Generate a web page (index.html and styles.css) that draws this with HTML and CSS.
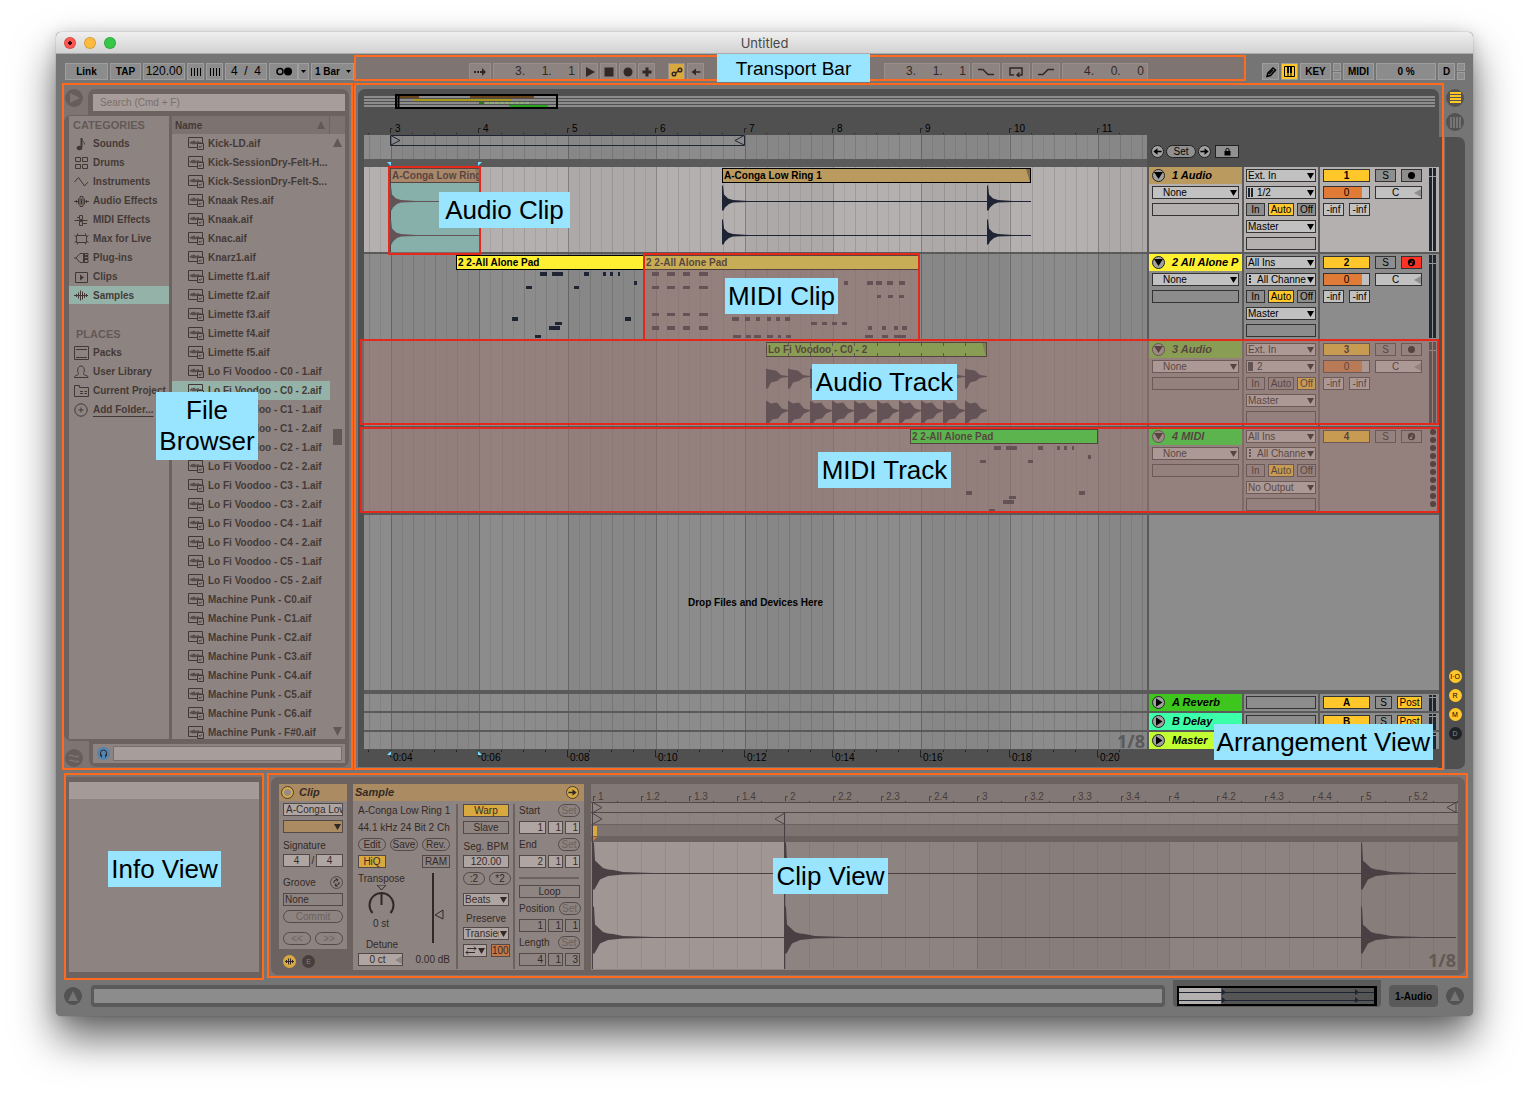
FILE: index.html
```html
<!DOCTYPE html>
<html lang="en">
<head>
<meta charset="utf-8">
<title>Untitled</title>
<meta name="viewport" content="width=device-width, initial-scale=1">
<link rel="stylesheet" href="styles.css">
</head>
<body>
<svg class="defs" aria-hidden="true">
  <symbol id="i-note" viewBox="0 0 16 16"><path d="M8.500 2v9" class="st two"/><path d="M8.500 2.500c0 3 3.500 3 3 6" class="st"/><ellipse cx="6.500" cy="12" rx="2.800" ry="2.200" class="fl"/></symbol>
  <symbol id="i-drums" viewBox="0 0 16 16"><path d="M2.500 2.500h5v4h-5zM9.500 2.500h5v4h-5zM2.500 9.500h5v4h-5zM9.500 9.500h5v4h-5z" class="st"/></symbol>
  <symbol id="i-inst" viewBox="0 0 16 16"><path d="M1.500 8l4-4.500 6 8.500 3.500-4" class="st"/></symbol>
  <symbol id="i-afx" viewBox="0 0 16 16"><path d="M1 8.500h4M3.500 7v3M5.500 5.500v6M11.500 5.500v6M13.500 7v3M12 8.500h4M7 3.500h3v10H7zM8.500 5.500v6" class="st"/></symbol>
  <symbol id="i-mfx" viewBox="0 0 16 16"><path d="M4 5.500h3M1.500 8.500h13M10 11.500h4M6.500 3.500h3v4h-3zM6.500 9.500h3v4h-3z" class="st"/></symbol>
  <symbol id="i-max" viewBox="0 0 16 16"><path d="M3.500 4.500h10v7h-10zM4.500 2.500v2M12.500 2.500v2M4.500 11.500v2M12.500 11.500v2M1.500 4.500l2 1.500v4l-2 1.500M15.500 4.500l-2 1.500v4l2 1.500" class="st"/></symbol>
  <symbol id="i-plug" viewBox="0 0 16 16"><path d="M1 8h2l4-4.500h3.500v9H7L3 8M12 3.500h3v2h-3M12 6.500h3v2h-3M12 9.500h3v3h-3M11.500 3v10" class="st"/></symbol>
  <symbol id="i-clip" viewBox="0 0 16 16"><path d="M2.500 3.500h12v10h-12z" class="st"/><path d="M7 5.500l4 3-4 3z" class="fl"/></symbol>
  <symbol id="i-samp" viewBox="0 0 16 16"><path d="M1 8.500h14M3.500 7v3M5.500 5.500v6M7.500 3.500v10M9.500 4.500v8M11.500 6v5M13.500 7v3" class="st"/></symbol>
  <symbol id="i-pack" viewBox="0 0 16 16"><path d="M1.500 1.500h14v13h-14zM3 4.500h11M3 12.500h11" class="st"/></symbol>
  <symbol id="i-user" viewBox="0 0 16 16"><path d="M1.500 13.500v-1c1-1.500 4-1 4-3C4 7 4.500 2 8 2s4 5 2.500 7.500c0 2 3 1.500 4.500 3v1z" class="st"/></symbol>
  <symbol id="i-proj" viewBox="0 0 16 16"><path d="M1.500 13.500v-11h5v2h9v9zM7 8.500h3M11.500 8.500H14M7 10.500h3M11.500 10.500H14" class="st"/></symbol>
  <symbol id="i-add" viewBox="0 0 16 16"><circle cx="8" cy="8" r="6.200" class="st"/><path d="M5.500 8h5M8 5.500v5" class="st"/></symbol>
  <symbol id="i-file" viewBox="0 0 16 13"><path d="M9.500 10.500h-9v-10h14v6" class="st"/><path d="M1.500 5.500h1v1h1V4.500h1V7h1V4h1v3h1V5h1v1.500h1V4.500h1v2h1v-1h2" class="st thin"/><path d="M9.500 6.500h6v6h-6zM11 9l1 1.500 2-2" class="st"/></symbol>
  <symbol id="i-left" viewBox="0 0 12 12"><path d="M6 2.500v7L1.500 6zM5 5.200h5.500v1.600H5z" class="fl"/></symbol>
  <symbol id="i-right" viewBox="0 0 12 12"><path d="M6 2.500v7L10.500 6zM7 5.200H1.500v1.600H7z" class="fl"/></symbol>
  <symbol id="i-key" viewBox="0 0 12 12"><path fill-rule="evenodd" d="M6 2a4 4 0 1 0 0 8 4 4 0 1 0 0-8zM6.200 3.200c.3 1 1.800 1.200 1.300 3C7.200 5.500 7 5.200 6.800 5.200V7.500A1.500 1.200 0 1 1 6.200 6.600z" class="fl"/></symbol>
</svg>

<main class="window">
  <header class="titlebar">
    <span class="lights"><button class="light red" aria-label="Close"></button><button class="light amber" aria-label="Minimise"></button><button class="light green" aria-label="Zoom"></button></span>
    <h1>Untitled</h1>
  </header>

  <div class="toolbar">
    <div class="tools">
      <button class="tb w44">Link</button><button class="tb w32">TAP</button><button class="tb w43 num">120.00</button>
      <button class="tb w18" aria-label="Nudge down"><svg width="12" height="8"><path d="M1.500 0v8M4.500 0v8M7.500 0v8M10.500 0v8" class="k"/></svg></button><button class="tb w18" aria-label="Nudge up"><svg width="12" height="8"><path d="M1.500 0v8M4.500 0v8M7.500 0v8M10.500 0v8" class="k"/></svg></button>
      <button class="tb w43 sig">4 &nbsp;/&nbsp; 4</button><span class="pair"><button class="tb w30" aria-label="Metronome"><svg width="18" height="9"><circle cx="5" cy="4.500" r="3" class="k2"/><circle cx="13" cy="4.500" r="4"/></svg></button><button class="tb w10" aria-label="Metronome menu"><svg width="5" height="3"><path d="M0 0h5L2.500 3z"/></svg></button></span>
      <button class="tb w44 bar">1 Bar<svg width="5" height="3"><path d="M0 0h5L2.500 3z"/></svg></button>
    </div>
    <section class="transport" aria-label="Transport">
      <div class="tools">
        <button class="tb w23" aria-label="Follow"><svg width="14" height="8"><path d="M1 3h2v2H1zM4 3h2v2H4zM7 3h2v2H7zM9 0l4 4-4 4z"/></svg></button><button class="tb w87 pos">3.&nbsp;&nbsp;&nbsp;&nbsp; 1.&nbsp;&nbsp;&nbsp;&nbsp; 1</button>
        <button class="tb w18" aria-label="Play"><svg width="10" height="10"><path d="M1 0l9 5-9 5z"/></svg></button><button class="tb w18" aria-label="Stop"><svg width="10" height="10"><path d="M.5.5h9v9h-9z"/></svg></button><button class="tb w18" aria-label="Record"><svg width="10" height="10"><circle cx="5" cy="5" r="4.500"/></svg></button><button class="tb w18" aria-label="Overdub"><svg width="10" height="10"><path d="M3.500.5h3v3h3v3h-3v3h-3v-3h-3v-3h3z"/></svg></button>
      </div>
      <div class="tools">
        <button class="tb w18 on" aria-label="Automation arm"><svg width="12" height="12"><path d="M4.500 7L7.500 5" class="k2"/><circle cx="3" cy="8" r="1.800" class="k2"/><circle cx="9" cy="4" r="1.800" class="k2"/></svg></button><button class="tb w18" aria-label="Re-enable automation"><svg width="12" height="12"><use href="#i-left"/></svg></button>
      </div>
      <div class="tools right">
        <button class="tb w87 pos">3.&nbsp;&nbsp;&nbsp;&nbsp; 1.&nbsp;&nbsp;&nbsp;&nbsp; 1</button><button class="tb w29" aria-label="Punch in"><svg width="16" height="8"><path d="M0 1.500h5l5 5h6" class="k2"/></svg></button><button class="tb w29" aria-label="Loop"><svg width="14" height="10"><path d="M5 8H1V1h12v7H9M10.500 5.500L8 8l2.500 2" class="k2"/></svg></button><button class="tb w29" aria-label="Punch out"><svg width="16" height="8"><path d="M0 6.500h5l5-5h6" class="k2"/></svg></button><button class="tb w87 pos">4.&nbsp;&nbsp;&nbsp;&nbsp; 0.&nbsp;&nbsp;&nbsp;&nbsp; 0</button>
      </div>
      <strong class="tag small">Transport Bar</strong>
    </section>
    <div class="tools">
      <button class="tb w18" aria-label="Draw mode"><svg width="12" height="12"><path d="M2 10.500L3 7l5-5 2.500 2-5 5.500z" class="k2"/><path d="M4 8l4-4" class="k2"/></svg></button><button class="tb w18 on" aria-label="Keyboard"><svg width="11" height="11"><path d="M.5.5h10v10H.500zM4 1v10M7 1v10" class="k"/><path d="M3 1h2v6H3zM6 1h2v6H6z"/></svg></button><button class="tb w32">KEY</button><span class="leds"><i></i><i></i></span><button class="tb w32">MIDI</button><button class="tb w61">0 %</button><button class="tb w18">D</button><span class="leds"><i></i><i></i></span>
    </div>
  </div>

  <div class="main">
    <section class="browser frame tint" aria-label="Browser">
      <div class="searchrow">
        <button class="disc" aria-label="Hide browser"><svg width="18" height="18"><path d="M5 4l10 5-10 5z"/></svg></button>
        <div class="searchbox"><input type="search" aria-label="Search" placeholder="Search (Cmd + F)"></div>
      </div>
      <div class="lists">
        <nav class="cats">
          <h2>CATEGORIES</h2>
          <a href="#sounds"><svg><use href="#i-note"/></svg>Sounds</a>
          <a href="#drums"><svg><use href="#i-drums"/></svg>Drums</a>
          <a href="#instruments"><svg><use href="#i-inst"/></svg>Instruments</a>
          <a href="#audiofx"><svg><use href="#i-afx"/></svg>Audio Effects</a>
          <a href="#midifx"><svg><use href="#i-mfx"/></svg>MIDI Effects</a>
          <a href="#max"><svg><use href="#i-max"/></svg>Max for Live</a>
          <a href="#plugins"><svg><use href="#i-plug"/></svg>Plug-ins</a>
          <a href="#clips"><svg><use href="#i-clip"/></svg>Clips</a>
          <a href="#samples" class="cur"><svg><use href="#i-samp"/></svg>Samples</a>
          <h2 class="places">PLACES</h2>
          <a href="#packs"><svg><use href="#i-pack"/></svg>Packs</a>
          <a href="#library"><svg><use href="#i-user"/></svg>User Library</a>
          <a href="#project"><svg><use href="#i-proj"/></svg>Current Project</a>
          <a href="#add"><svg><use href="#i-add"/></svg><u>Add Folder...</u></a>
        </nav>
        <div class="files">
          <div class="fhead"><span>Name</span><svg width="8" height="8"><path d="M4 0l4 8H0z"/></svg></div>
          <ul id="files"></ul>
          <div class="scroll"><svg width="9" height="9"><path d="M4.500 0L9 9H0z"/></svg><i></i><svg width="9" height="9"><path d="M4.500 9L9 0H0z"/></svg></div>
        </div>
      </div>
      <div class="preview">
        <button class="disc" aria-label="Groove pool"><svg width="18" height="18"><path d="M4 7c3-3 5 3 10 0M4 12c3-3 5 3 10 0" class="k2"/></svg></button>
        <div class="prebox"><div><button class="phones" aria-label="Preview"><svg width="13" height="13"><path d="M3.500 9V6a3 3 0 0 1 6 0v3M4.500 7.500v3M8.500 7.500v3" class="k"/></svg></button><input type="text" aria-label="Preview position"></div></div>
      </div>
      <strong class="tag t-browser">File Browser</strong>
    </section>

    <section class="arr frame" aria-label="Arrangement">
      <div class="panel">
        <svg class="overview" height="23" width="100%"></svg>
        <div class="rulers">
          <div class="rcol"><svg class="ruler" id="bars" height="23" width="100%"></svg>
            <div class="scrub"><svg class="grid" width="100%" height="24"></svg></div>
            <div class="strip"><svg width="140" height="8"><path d="M23 3h4v4zM114 3h4l-4 4z"/></svg></div></div>
          <div class="setrow"><button class="rnd" aria-label="Previous locator"><svg width="11" height="11"><use href="#i-left"/></svg></button><button class="pill">Set</button><button class="rnd" aria-label="Next locator"><svg width="11" height="11"><use href="#i-right"/></svg></button><button class="lock" aria-label="Lock envelopes"><svg width="9" height="9"><path d="M1.500 4h6v4.500h-6z"/><path d="M3 4V2.500c0-1.500 3-1.500 3 0V4" class="k"/></svg></button></div>
        </div>

        <div class="track lite">
          <div class="lane"><svg class="grid" width="100%" height="85"></svg>
            <div class="clip teal c1"><b>A-Conga Low Ring 1</b></div>
            <div class="clip tan c2"><b>A-Conga Low Ring 1</b></div>
            <svg class="ink" width="100%" height="85" data-conga="26:90,358:667,623:667"></svg>
            <div class="hot h1"></div><strong class="tag t1">Audio Clip</strong>
          </div>
          <div class="th"><div class="tname tan"><button class="fold" aria-label="Fold"></button>1 Audio</div><span class="sel ind"><select aria-label="Device"><option>None</option></select></span><div class="box"></div></div>
          <div class="io"><span class="sel"><select aria-label="Input"><option>Ext. In</option></select></span><span class="sel ch"><svg width="6" height="9"><path d="M0 0h2v9H0zM3 0h2v9H3z"/></svg><select aria-label="Channel"><option>1/2</option></select></span><div class="mon"><button>In</button><button class="on">Auto</button><button>Off</button></div><span class="sel"><select aria-label="Output"><option>Master</option></select></span><div class="box"></div></div>
          <div class="mix"><div class="mrow"><button class="act">1</button><button>S</button><button aria-label="Arm"><svg width="9" height="9"><circle cx="4.500" cy="4.500" r="3.500"/></svg></button></div><div class="mrow"><span class="vol">0</span><span class="pan">C</span></div><div class="mrow inf"><span>-inf</span><span>-inf</span></div><div class="meter"><i></i><i></i></div></div>
        </div>

        <div class="track">
          <div class="lane"><svg class="grid" width="100%" height="85"></svg>
            <div class="clip yellow c3"><b>2 2-All Alone Pad</b></div>
            <div class="clip yellow c4"><b>2 2-All Alone Pad</b></div>
            <svg class="ink" width="100%" height="85" data-pad="93" data-chords="1"></svg>
            <div class="hot h2"></div><strong class="tag t2">MIDI Clip</strong>
          </div>
          <div class="th"><div class="tname yellow"><button class="fold" aria-label="Fold"></button>2 All Alone P</div><span class="sel ind"><select aria-label="Device"><option>None</option></select></span><div class="box"></div></div>
          <div class="io"><span class="sel"><select aria-label="Input"><option>All Ins</option></select></span><span class="sel ch"><svg width="6" height="9"><path d="M1 0h2v2H1zM1 3h2v2H1zM1 6h2v2H1z"/></svg><select aria-label="Channel"><option>All Channels</option></select></span><div class="mon"><button>In</button><button class="on">Auto</button><button>Off</button></div><span class="sel"><select aria-label="Output"><option>Master</option></select></span><div class="box"></div></div>
          <div class="mix"><div class="mrow"><button class="act">2</button><button>S</button><button class="armed" aria-label="Arm"><svg width="11" height="11"><use href="#i-key"/></svg></button></div><div class="mrow"><span class="vol">0</span><span class="pan">C</span></div><div class="mrow inf"><span>-inf</span><span>-inf</span></div><div class="meter"><i></i><i></i></div></div>
        </div>

        <div class="track mark m3">
          <div class="lane"><svg class="grid" width="100%" height="85"></svg>
            <div class="clip olive c5"><b>Lo Fi Voodoo - C0 - 2</b></div>
            <svg class="ink" width="100%" height="85" data-voodoo="402"></svg>
            <strong class="tag t3">Audio Track</strong>
          </div>
          <div class="th"><div class="tname olive"><button class="fold" aria-label="Fold"></button>3 Audio</div><span class="sel ind"><select aria-label="Device"><option>None</option></select></span><div class="box"></div></div>
          <div class="io"><span class="sel"><select aria-label="Input"><option>Ext. In</option></select></span><span class="sel ch"><svg width="6" height="9"><path d="M0 0h5v9H0z"/></svg><select aria-label="Channel"><option>2</option></select></span><div class="mon"><button>In</button><button>Auto</button><button class="on">Off</button></div><span class="sel"><select aria-label="Output"><option>Master</option></select></span><div class="box"></div></div>
          <div class="mix"><div class="mrow"><button class="act">3</button><button>S</button><button aria-label="Arm"><svg width="9" height="9"><circle cx="4.500" cy="4.500" r="3.500"/></svg></button></div><div class="mrow"><span class="vol">0</span><span class="pan">C</span></div><div class="mrow inf"><span>-inf</span><span>-inf</span></div><div class="meter"><i></i><i></i></div></div>
        </div>

        <div class="track mark m4">
          <div class="lane"><svg class="grid" width="100%" height="85"></svg>
            <div class="clip lime c6"><b>2 2-All Alone Pad</b></div>
            <svg class="ink" width="100%" height="85" data-pad="547"></svg>
            <strong class="tag t4">MIDI Track</strong>
          </div>
          <div class="th"><div class="tname lime"><button class="fold" aria-label="Fold"></button>4 MIDI</div><span class="sel ind"><select aria-label="Device"><option>None</option></select></span><div class="box"></div></div>
          <div class="io"><span class="sel"><select aria-label="Input"><option>All Ins</option></select></span><span class="sel ch"><svg width="6" height="9"><path d="M1 0h2v2H1zM1 3h2v2H1zM1 6h2v2H1z"/></svg><select aria-label="Channel"><option>All Channels</option></select></span><div class="mon"><button>In</button><button class="on">Auto</button><button>Off</button></div><span class="sel"><select aria-label="Output"><option>No Output</option></select></span><div class="box"></div></div>
          <div class="mix"><div class="mrow"><button class="act">4</button><button>S</button><button aria-label="Arm"><svg width="11" height="11"><use href="#i-key"/></svg></button></div><svg class="dots" width="8" height="84"></svg></div>
        </div>

        <div class="drop"><div class="lane"><svg class="grid" width="100%" height="175"></svg><p>Drop Files and Devices Here</p></div><div class="blank"></div></div>

        <div class="track ret"><div class="lane"><svg class="grid" width="100%" height="17"></svg></div><div class="th"><div class="tname g1"><button class="fold r" aria-label="Unfold"></button>A Reverb</div></div><div class="io"><div class="box"></div></div><div class="mix"><div class="mrow"><button class="act">A</button><button class="s16">S</button><button class="post">Post</button></div><div class="meter"><i></i><i></i></div></div></div>
        <div class="track ret"><div class="lane"><svg class="grid" width="100%" height="17"></svg></div><div class="th"><div class="tname g2"><button class="fold r" aria-label="Unfold"></button>B Delay</div></div><div class="io"><div class="box"></div></div><div class="mix"><div class="mrow"><button class="act">B</button><button class="s16">S</button><button class="post">Post</button></div><div class="meter"><i></i><i></i></div></div></div>
        <div class="track ret master"><div class="lane"><svg class="grid" width="100%" height="17"></svg><span class="div8">1/8</span></div><div class="th"><div class="tname g3"><button class="fold r" aria-label="Unfold"></button>Master</div></div><div class="io"></div><div class="mix"><div class="meter"><i></i><i></i></div></div></div>
        <svg class="ruler" id="times" height="18" width="100%"></svg>
      </div>
      <strong class="tag t-arr">Arrangement View</strong>
    </section>

    <div class="rail">
      <button class="disc on" aria-label="Arrangement view"><svg width="18" height="18"><path d="M4 4h11M4 7h11M4 10h11M4 13h11" class="k3"/></svg></button>
      <button class="disc" aria-label="Session view"><svg width="18" height="18"><path d="M5 4v11M8 4v11M11 4v11M14 4v11" class="k3"/></svg></button>
      <div class="railbox"><button>I·O</button><button>R</button><button>M</button><button class="off">D</button></div>
    </div>
  </div>

  <div class="lower">
    <section class="info frame tint" aria-label="Info"><div class="infobody"><div></div></div><strong class="tag t-info">Info View</strong></section>
    <section class="detail frame tint" aria-label="Clip detail">
      <div class="clipcol">
        <form class="clipbox">
          <h2><button type="button" class="power" aria-label="Clip activator"></button>Clip</h2>
          <div class="fields">
            <input type="text" aria-label="Clip name" value="A-Conga Low Ring 1">
            <span class="sel col"><select aria-label="Clip colour"><option></option></select></span>
            <label for="num">Signature</label>
            <div class="cr"><input id="num" class="mid" value="4"><span>/</span><input class="mid" aria-label="Denominator" value="4"></div>
            <div class="cr groove"><span>Groove</span><button type="button" class="swap" aria-label="Hot-swap groove"><svg width="13" height="13"><path d="M4 7V5l3-1.500M9 6v2L6 9.500M5.500 2.500L8 3.500 7 5.500M7.500 10.500L5 9.500l1-2" class="k"/></svg></button></div>
            <div class="box txt">None</div>
            <button type="button" class="pl dim">Commit</button>
            <div class="cr nudge"><button type="button" class="pl dim">&lt;&lt;</button><button type="button" class="pl dim">&gt;&gt;</button></div>
          </div>
        </form>
        <div class="modes"><button aria-label="Sample box"><svg width="13" height="13"><path d="M2 6.500h9M3.500 5v3M5.500 3.500v6M7.500 3.500v6M9.500 5v3" class="k"/></svg></button><button class="off">E</button></div>
      </div>
      <form class="sample">
        <h2>Sample<button type="button" class="go" aria-label="Hide editor"><svg width="11" height="11"><use href="#i-right"/></svg></button></h2>
        <div class="scols">
          <div class="s1">
            <p>A-Conga Low Ring 1</p><p class="fmt">44.1 kHz 24 Bit 2 Ch</p>
            <div class="cr"><button type="button" class="pl">Edit</button><button type="button" class="pl">Save</button><button type="button" class="pl">Rev.</button></div>
            <div class="cr"><button type="button" class="sq on">HiQ</button><button type="button" class="sq">RAM</button></div>
            <div class="pitch">
              <div><span>Transpose</span><svg width="46" height="32"><path d="M19 0h9l-4.500 5z" class="k"/><path d="M14.500 28a12 12 0 1 1 18 0M23.500 7v13" class="k3"/></svg><span class="c">0 st</span><span class="c det">Detune</span></div>
              <svg width="16" height="72"><path d="M4 1v70" class="k3"/><path d="M6 43l8-5v9z" class="k"/></svg>
            </div>
            <div class="cr"><span class="ct">0 ct</span><span>0.00 dB</span></div>
          </div>
          <div class="s2">
            <button type="button" class="sq on">Warp</button><button type="button" class="sq">Slave</button>
            <label for="bpm">Seg. BPM</label><input id="bpm" class="mid" value="120.00">
            <div class="cr"><button type="button" class="pl">:2</button><button type="button" class="pl">*2</button></div>
            <span class="sel beats"><select aria-label="Warp mode"><option>Beats</option></select></span>
            <label for="pres">Preserve</label><span class="sel"><select id="pres"><option>Transients</option></select></span>
            <div class="cr"><span class="sel loopm"><svg width="12" height="9"><path d="M1 6.500h9M3 4.500L1 6.500l2 2M11 2.500H2M9 .5l2 2-2 2" class="k"/></svg><select aria-label="Transient loop mode"><option></option></select></span><span class="env">100</span></div>
          </div>
          <div class="s3">
            <div class="cr"><span>Start</span><button type="button" class="pl dim">Set</button></div><div class="tri"><span>1</span><span>1</span><span>1</span></div>
            <div class="cr"><span>End</span><button type="button" class="pl dim">Set</button></div><div class="tri"><span>2</span><span>1</span><span>1</span></div>
            <hr><button type="button" class="sq">Loop</button>
            <div class="cr"><span>Position</span><button type="button" class="pl dim">Set</button></div><div class="tri flat"><span>1</span><span>1</span><span>1</span></div>
            <div class="cr"><span>Length</span><button type="button" class="pl dim">Set</button></div><div class="tri flat"><span>4</span><span>1</span><span>3</span></div>
          </div>
        </div>
      </form>
      <div class="editor"><svg id="editor" width="100%" height="186"></svg><span class="div8">1/8</span></div>
      <strong class="tag t-clip">Clip View</strong>
    </section>
  </div>

  <footer class="status">
    <button class="disc" aria-label="Info view"><svg width="18" height="18"><path d="M9 4l5 10H4z"/></svg></button>
    <div class="msg"></div>
    <div class="mini"><svg width="200" height="20"><path d="M0 0h200v20H0z" class="bg"/><path d="M2 2h42v16H2z" class="lt"/><path d="M44 2h153v16H44z" class="dk"/><path d="M2 6.500h195M2 14.500h195" class="ln"/><path d="M45 3l4 3.500-4 2.500zM45 11l4 3.500-4 2.500zM178 3l4 3.500-4 2.500zM178 11l4 3.500-4 2.500z" class="wv"/></svg></div>
    <button class="sel1">1-Audio</button>
    <button class="disc" aria-label="Detail view"><svg width="18" height="18"><path d="M9 4l5 10H4z"/></svg></button>
  </footer>
</main>
<script src="app.js"></script>
</body>
</html>
```
FILE: styles.css
```css
* { box-sizing: border-box; }
:root {
  --frame: #ff6a1f;
  --red: #e4281b;
  --bg: #757575;
  --dark: #505050;
  --edge: #5a5a5a;
  --face: #8c8c8c;
  --light: #c1c1c1;
  --line: #333;
  --on: #ffc729;
  --pick: #98d4cb;
}
body { margin: 0; padding: 32px 56px 79px; background: #fff; font: 10px/13px "Liberation Sans", Arial, sans-serif; color: #000; }
h1, h2, p, ul { margin: 0; padding: 0; font-size: inherit; }
button, input, select { font: inherit; color: inherit; margin: 0; padding: 0; border: 0; background: none; border-radius: 0; appearance: none; min-width: 0; }
input { outline: 0; }
svg { display: block; flex: none; }
.defs { position: absolute; width: 0; height: 0; }
.st { fill: none; stroke: currentColor; }
.two { stroke-width: 2; }
.thin { stroke-width: .7; }
.fl { fill: currentColor; }
.k { fill: none; stroke: #000; }
.k2 { fill: none; stroke: #000; stroke-width: 1.5; }
.k3 { fill: none; stroke: #000; stroke-width: 2; }

.window { min-width: 1000px; border-radius: 5px; background: var(--bg); box-shadow: 0 0 1px rgba(0,0,0,.5), 0 22px 42px rgba(0,0,0,.6), 0 2px 16px rgba(0,0,0,.15); }
.titlebar { position: relative; height: 22px; display: flex; align-items: center; justify-content: center; border-radius: 5px 5px 0 0; background: linear-gradient(#efefef, #d2d2d2); border-bottom: 1px solid #ababab; }
.titlebar h1 { font: 13px/20px Inter, sans-serif; color: #484848; }
.lights { position: absolute; left: 8px; top: 5px; display: flex; gap: 8px; }
.light { width: 12px; height: 12px; border-radius: 50%; border: 1px solid rgba(0,0,0,.15); }
.red { background: radial-gradient(circle, #400 2px, #fc5753 2px); }
.amber { background: #fdbc40; }
.green { background: #34c748; }

.toolbar { display: flex; height: 29px; padding: 9px 7px 0 9px; }
.tools { display: flex; gap: 1px; }
.tb { height: 17px; display: flex; align-items: center; justify-content: center; white-space: nowrap; background: var(--face); border: 1px solid #9e9e9e; outline: 0; font-weight: bold; font-size: 10px; margin-right: 1px; }
.tb.num { font-size: 12px; font-weight: normal; }
.tb.sig { font-size: 12px; font-weight: normal; }
.tb.pos { justify-content: flex-end; padding-right: 3px; font-size: 12px; font-weight: normal; white-space: pre; }
.tb.on { background: var(--on); }
.tb.bar { justify-content: space-between; padding: 0 2px 0 3px; margin: 0; }
.pair { display: flex; }
.pair .tb + .tb { margin-left: -1px; }
.w10 { width: 11px; } .w18 { width: 17px; } .w23 { width: 22px; } .w29 { width: 28px; } .w30 { width: 29px; } .w32 { width: 31px; } .w43 { width: 42px; } .w44 { width: 43px; } .w61 { width: 60px; } .w87 { width: 86px; }
.leds { display: flex; flex-direction: column; gap: 1px; margin-right: 1px; }
.leds i { width: 8px; height: 8px; background: var(--face); border: 1px solid #9e9e9e; }
.transport { position: relative; flex: 1; display: flex; padding-left: 115px; margin-right: 16px; gap: 12px; }
.transport .tools { height: 17px; }
.transport .right { margin-left: auto; padding-right: 97px; }
.transport::after { content: ""; position: absolute; inset: -8px 0 2px 0; border: 2px solid var(--frame); background: rgba(143,114,106,.35); pointer-events: none; }

.frame { position: relative; border: 2px solid var(--frame); }
.tint::after { content: ""; position: absolute; inset: 0; background: rgba(143,114,106,.35); pointer-events: none; z-index: 2; }
.tag { position: absolute; z-index: 5; height: 36px; padding: 0 3px; background: #99e4ff; font-weight: normal; font-size: 26px; line-height: 36px; text-align: center; white-space: nowrap; }
.tag.small { left: 363px; top: -9px; width: 153px; height: 28px; font-size: 19px; line-height: 30px; }

.main { display: flex; gap: 1px; padding: 0 8px 0 6px; }
.disc { width: 18px; height: 18px; border-radius: 50%; background: #525252; flex: none; }
.disc path { fill: #757575; }
.disc .k2, .disc .k3 { fill: none; stroke: #757575; }

.browser { width: 291px; flex: none; display: flex; flex-direction: column; padding: 4px 2px 1px 0; font-weight: bold; font-size: 10px; color: #000; }
.searchrow { display: flex; align-items: flex-start; gap: 5px; }
.searchrow .disc { margin-left: 1px; }
.searchbox { flex: 1; height: 27px; margin-bottom: -1px; padding: 5px 4px 0 5px; background: var(--edge); border-radius: 7px 7px 0 0; }
.searchbox input { display: block; width: 100%; height: 17px; padding: 0 7px; background: #b4b4b4; font-weight: normal; }
.searchbox input::placeholder { color: #6e6e6e; opacity: 1; }
.lists { display: flex; gap: 3px; padding: 1px 4px 2px 5px; background: var(--edge); border-radius: 7px 0 0 7px; }
.cats { width: 100px; background: var(--face); overflow: hidden; }
.cats h2 { height: 18px; padding-left: 4px; font-size: 11px; line-height: 18px; color: #4c4c4c; }
.cats h2.places { margin-top: 20px; height: 19px; padding-left: 7px; line-height: 20px; }
.cats a { display: flex; align-items: center; gap: 4px; height: 19px; padding-left: 4px; white-space: nowrap; color: #1a1a1a; text-decoration: none; }
.cats a svg { width: 16px; height: 16px; }
.cats a.cur { background: var(--pick); height: 18px; }
.cats u { text-underline-offset: 3px; }
.files { flex: 1; position: relative; background: var(--face); overflow: hidden; }
.fhead { height: 18px; display: flex; justify-content: space-between; align-items: center; margin-right: 15px; padding: 0 4px 0 3px; background: #727272; border-right: 1px solid var(--edge); box-shadow: 15px 0 #727272; color: #1a1a1a; }
.fhead svg { fill: #4a4a4a; }
.files ul { list-style: none; margin: 0 15px -3px 0; }
.files li { display: flex; align-items: center; gap: 4px; height: 19px; padding-left: 16px; white-space: nowrap; color: #1a1a1a; }
.files li.cur { background: var(--pick); }
.scroll { position: absolute; right: 3px; top: 22px; bottom: 3px; display: flex; flex-direction: column; justify-content: space-between; }
.scroll svg { fill: #4a4a4a; }
.scroll i { width: 9px; height: 16px; background: #4a4a4a; }
.preview { display: flex; gap: 6px; align-items: center; }
.preview .disc { margin: 7px 0 0 1px; }
.prebox { flex: 1; height: 26px; padding: 3px 4px 4px 4px; background: var(--edge); border-radius: 0 0 7px 7px; }
.prebox div { display: flex; align-items: center; gap: 3px; height: 19px; padding: 0 3px 0 4px; background: var(--face); }
.prebox input { flex: 1; height: 15px; background: #b4b4b4; border: 1px solid #6e6e6e; }
.phones { width: 13px; height: 13px; border-radius: 50%; background: #2f8ed8; }
.t-browser { left: 92px; top: 307px; width: 102px; height: 68px; padding: 3px 0; line-height: 31px; white-space: normal; }

.arr { flex: 1; min-width: 0; padding: 4px 3px 0 2px; background: linear-gradient(transparent 52px, var(--dark) 52px) right / 4px 100% no-repeat; }
.panel { padding: 0 0 0 6px; background: var(--dark); border-radius: 7px 7px 0 0; }
.rulers, .track, .drop { display: flex; gap: 2px; }
.rcol, .lane { flex: 1; min-width: 0; position: relative; }
.ruler path, #editor .tick { fill: none; stroke: #222; }
.scrub { height: 24px; background: var(--face); }
.strip { height: 8px; background: var(--edge); }
.strip path { fill: #7df; }
.setrow { width: 290px; display: flex; gap: 2px; align-items: flex-start; padding: 33px 0 0 2px; }
.rnd { width: 13px; height: 13px; padding: 1px; border-radius: 50%; background: #a0a0a0; border: 1px solid #222; }
.rnd svg { margin: -1px; }
.pill { width: 30px; height: 13px; border-radius: 7px; background: #909090; border: 1px solid #222; line-height: 11px; }
.lock { width: 24px; height: 13px; margin-left: 2px; border: 1px solid #222; background: #909090; display: grid; place-items: center; }

.track { position: relative; margin-bottom: 2px; background: var(--edge); box-shadow: 0 2px var(--edge); }
.lane { background: var(--face); overflow: visible; }
.th { width: 93px; background: var(--face); }
.io { width: 74px; padding: 2px; background: var(--face); }
.mix { width: 119px; position: relative; padding: 2px 3px; background: var(--face); }
.lite .lane, .lite .th, .lite .io, .lite .mix { background: #b4b0b0; }
.io, .th, .mix { display: flex; flex-direction: column; gap: 4px; }
.th { gap: 0; }
.tname { height: 17px; display: flex; align-items: center; gap: 7px; padding-left: 3px; font-weight: bold; font-style: italic; font-size: 11px; white-space: nowrap; overflow: hidden; }
.th .sel, .th .box { margin: 2px 3px; width: 87px; }
.fold { width: 13px; height: 13px; flex: none; border-radius: 50%; border: 1px solid #222; background: #a0a0a0; display: grid; place-items: center; }
.fold::after { content: ""; width: 9px; height: 7px; background: #000; clip-path: polygon(0 0, 100% 0, 50% 100%); }
.fold.r::after { width: 7px; height: 9px; clip-path: polygon(0 0, 100% 50%, 0 100%); margin-left: 1px; }
.tan { background: #bb9a5f; } .yellow { background: #fff032; } .olive { background: #73ca2e; } .lime { background: #0bff20; }
.g1 { background: #3ec61e; } .g2 { background: #3cffa9; } .g3 { background: #c1ff32; }
.sel { position: relative; display: block; height: 13px; width: 70px; background: var(--light); border: 1px solid var(--line); }
.sel select { display: block; width: calc(100% - 9px); height: 11px; padding-left: 1px; line-height: 11px; overflow: hidden; text-overflow: clip; }
.sel::after { content: ""; position: absolute; right: 1px; top: 3px; width: 7px; height: 6px; background: #000; clip-path: polygon(0 0, 100% 0, 50% 100%); }
.sel.ind select { padding-left: 10px; }
.sel.ch svg { position: absolute; left: 1px; top: 1px; fill: #1e2630; }
.sel.ch select { padding-left: 10px; }
.box { height: 13px; border: 1px solid var(--line); }
.mon { display: flex; justify-content: space-between; height: 13px; }
.mon button { width: 19px; height: 13px; border: 1px solid var(--line); line-height: 11px; background: #8e8e8e; }
.mon button:nth-child(2) { width: 26px; }
.mon .on, .mix .act, .mix .post { background: var(--on); }
.mrow { display: flex; gap: 5px; height: 13px; }
.mrow button, .mrow span { height: 13px; width: 21px; border: 1px solid var(--line); line-height: 11px; background: #8e8e8e; text-align: center; display: grid; place-items: center; overflow: hidden; white-space: nowrap; }
.mrow .act { width: 47px; font-weight: bold; }
.mrow .vol { width: 47px; background: linear-gradient(90deg, #df7b37 38px, var(--light) 38px); }
.mrow .pan { width: 47px; background: var(--light); position: relative; padding-right: 6px; }
.pan::after { content: ""; position: absolute; right: 0; top: 2px; width: 7px; height: 8px; background: #8e8e8e; clip-path: polygon(100% 0, 100% 100%, 0 50%); }
.mrow.inf span { background: var(--light); }
.mrow .armed { background: #ff3324; }
.mrow .s16 { width: 17px; }
.mrow .post { width: 25px; }
.meter { position: absolute; right: 3px; top: 1px; bottom: 1px; display: flex; gap: 1px; }
.meter i { width: 3px; background: linear-gradient(#1e2630 8px, #999 8px, #999 9px, #1e2630 9px); }
.dots { position: absolute; right: 2px; top: 0; }
.ret { height: 17px; }
.master { margin-bottom: 0; box-shadow: none; }
.ret .meter i { background: linear-gradient(#1e2630 2px, #999 2px, #999 3px, #1e2630 3px); }
.ret .meter { bottom: 0; }

.clip { position: absolute; top: 1px; height: 15px; border: 1px solid #000; font-size: 10px; line-height: 14px; padding-left: 1px; white-space: nowrap; overflow: hidden; }
.clip::after { content: ""; position: absolute; right: 0; top: 0; width: 4px; height: 13px; background: rgba(0,0,0,.3); clip-path: polygon(0 0, 100% 0, 100% 100%); }
.yellow.clip::after, .lime.clip::after { display: none; }
.c1 { left: 26px; width: 90px; } .c2 { left: 358px; width: 309px; } .c3 { left: 92px; width: 189px; } .c4 { left: 280px; width: 275px; } .c5 { left: 402px; width: 221px; } .c6 { left: 546px; width: 188px; }
.clip.teal { height: 84px; background: linear-gradient(#bb9a5f 13px, #000 13px, #000 14px, #6cf5f0 14px); border-bottom: 0; }
.ink { position: absolute; left: 0; top: 0; fill: #1e2433; }
.ink .ln { stroke: #1e2433; }
.hot, .mark::after { content: ""; position: absolute; border: 2px solid var(--red); background: rgba(155,121,114,.56); pointer-events: none; z-index: 2; }
.h1 { left: 24px; top: -1px; width: 93px; height: 89px; z-index: 3; }
.h2 { left: 279px; top: -1px; width: 277px; height: 88px; }
.m3::after { inset: -2px 0 1px -4px; }
.m4::after { inset: -1px 0 0 -4px; }
.t1 { left: 75px; top: 25px; width: 131px; } .t2 { left: 361px; top: 24px; width: 113px; } .t3 { left: 448px; top: 23px; width: 145px; } .t4 { left: 454px; top: 24px; width: 133px; }
.drop { background: var(--edge); border-bottom: 4px solid var(--edge); }
.drop p { position: absolute; inset: 80px 0 auto; text-align: center; font-weight: bold; font-size: 10px; line-height: 16px; }
.blank { width: 290px; background: var(--face); }
.div8 { position: absolute; right: 2px; bottom: -1px; font: bold 18px/18px "Open Sans", sans-serif; color: var(--edge); }
.t-arr { right: 9px; bottom: 8px; }

.rail { width: 20px; display: flex; flex-direction: column; align-items: center; gap: 6px; padding: 6px 0 1px; }
.rail .disc.on .k3 { stroke: var(--on); }
.railbox { flex: 1; align-self: stretch; display: flex; flex-direction: column; justify-content: flex-end; align-items: center; gap: 6px; padding-bottom: 29px; background: var(--dark); border-radius: 0 7px 7px 0; }
.railbox button, .modes button { width: 13px; height: 13px; border-radius: 50%; background: var(--on); font-size: 7px; line-height: 13px; text-align: center; white-space: nowrap; }
.railbox .off, .modes .off { background: #1e2328; color: #888; }

.lower { display: flex; align-items: flex-start; gap: 3px; padding: 3px 5px 0 8px; }
.info { width: 200px; padding: 2px 0 0; background: linear-gradient(var(--edge), var(--edge)) 0 2px no-repeat; }
.infobody { margin: 5px 3px 6px; height: 190px; background: var(--face); }
.infobody div { height: 17px; background: #b0b0b0; }
.t-info { left: 42px; top: 76px; width: 113px; }
.detail { flex: 1; min-width: 0; display: flex; gap: 6px; padding: 9px 8px 6px 10px; }
.detail::before { content: ""; position: absolute; inset: 2px 1px 1px 2px; border-radius: 7px; background: var(--edge); }
.detail > * { position: relative; }
.clipcol { width: 68px; }
.clipbox { height: 165px; background: var(--face); }
.detail h2 { height: 17px; display: flex; align-items: center; gap: 5px; padding: 0 5px 0 2px; background: #bb9a5f; font-size: 11px; font-style: italic; color: #000; }
.power, .go { width: 13px; height: 13px; border-radius: 50%; border: 1px solid #222; background: var(--on); }
.power { background: radial-gradient(circle, #999 3px, var(--on) 4px); }
.go { margin-left: auto; }
.fields { padding: 2px 4px; display: flex; flex-direction: column; gap: 4px; }
.detail input, .detail .sel, .tri span, .ct, .env { height: 13px; border: 1px solid var(--line); background: var(--light); line-height: 11px; }
.detail input { width: 100%; padding-left: 2px; }
.detail .mid { text-align: center; padding: 0; }
.detail .sel { width: 100%; }
.detail .sel.col { background: #bb9a5f; }
.cr { display: flex; justify-content: space-between; align-items: center; height: 13px; gap: 4px; }
.fields label { line-height: 17px; height: 13px; }
.fields .cr { gap: 1px; }
.fields .mid { width: 27px; }
.groove { margin-top: 5px; }
.swap { width: 13px; height: 13px; border-radius: 50%; border: 1px solid var(--line); }
.swap svg { margin: -1px; }
.txt { line-height: 11px; padding-left: 1px; }
.pl { height: 13px; border: 1px solid var(--line); border-radius: 7px; line-height: 11px; min-width: 22px; white-space: nowrap; }
.s1 .pl, .nudge .pl, .s1 .sq { width: 28px; }
.dim { color: #5a5a5a; }
.nudge { margin-top: 5px; }
.modes { display: flex; gap: 6px; padding: 6px 0 0 4px; }
.modes .off { background: #222; }
.sample { width: 231px; height: 186px; background: var(--face); }
.scols { display: flex; padding: 3px 4px 1px 5px; }
.scols > div { display: flex; flex-direction: column; gap: 4px; height: 165px; }
.s1 { width: 100px; padding-right: 6px; border-right: 2px solid var(--edge); }
.s1 p { height: 13px; white-space: nowrap; }
.s2 { width: 57px; padding: 0 4px 0 5px; border-right: 2px solid var(--edge); }
.s3 { width: 65px; padding-left: 4px; }
.pitch { display: flex; height: 77px; justify-content: space-between; padding-right: 5px; }
.pitch div { width: 60px; }
.pitch span { display: block; height: 13px; }
.pitch .c { width: 46px; text-align: center; }
.pitch .det { margin-top: 8px; padding-left: 2px; }
.ct { width: 45px; text-align: center; padding-right: 6px; position: relative; }
.ct::after { content: ""; position: absolute; right: 0; top: 2px; width: 7px; height: 8px; background: #8e8e8e; clip-path: polygon(100% 0, 100% 100%, 0 50%); }
.sq { height: 13px; border: 1px solid var(--line); line-height: 11px; background: #8e8e8e; flex: none; }
.sq.on { background: var(--on); }
.s2 label { height: 13px; line-height: 17px; text-align: center; white-space: nowrap; }
.s2 input, .s2 .sel, .s2 .cr { flex: none; }
.beats { margin-top: 4px; }
.detail .loopm { width: 24px; }
.loopm svg { position: absolute; left: 1px; top: 1px; }
.env { width: 22px; background: #df7b37; text-align: center; }
.tri { display: flex; gap: 2px; height: 13px; }
.tri span { flex: 1; text-align: right; padding-right: 1px; }
.tri span:first-child { flex: none; width: 27px; padding-right: 2px; }
.tri.flat span { background: var(--face); }
.s3 hr { width: 60px; height: 2px; margin: 5px 0 2px; border: 0; background: var(--edge); flex: none; }
.editor { flex: 1; min-width: 0; margin-left: 1px; background: var(--face); }
#editor text { fill: #222; }
.editor .div8 { right: 2px; bottom: 1px; color: #4a4a4a; }
.detail .t-clip { position: absolute; left: 504px; top: 83px; width: 115px; }

.status { display: flex; align-items: flex-start; padding: 0 9px 0 8px; height: 36px; }
.status .disc { margin-top: 7px; }
.msg { flex: 1; height: 22px; margin: 5px 8px 0 9px; border: 4px solid var(--edge); border-width: 4px 3px; border-radius: 4px; background: var(--face); }
.mini { padding: 6px 4px 1px; background: var(--edge); border-radius: 0 0 4px 4px; }
.mini .bg { fill: #000; } .mini .lt { fill: #b4b0b0; } .mini .dk { fill: #555; } .mini .ln { stroke: #1e2433; } .mini .wv { fill: #1e2433; }
.sel1 { width: 49px; height: 22px; margin: 5px 8px 0 8px; border-radius: 4px; background: var(--edge); font-weight: bold; font-size: 10px; }
```
FILE: app.js
```js
// Timeline geometry: first bar line and bar width, in lane pixels.
var ORIGIN = 27, BAR = 88.4;
var $$ = function (s) { return document.querySelectorAll(s); };
function rect(x, y, w, h, fill) {
  return '<rect x="' + x + '" y="' + y + '" width="' + w + '" height="' + h + '"' + (fill ? ' fill="' + fill + '"' : '') + '/>';
}
function text(x, y, t) { return '<text x="' + x + '" y="' + y + '">' + t + '</text>'; }

// Bar shading and grid lines.
$$('svg.grid').forEach(function (g) {
  var out = '', w = g.getBoundingClientRect().width, x, i;
  for (i = 0; (x = Math.round(ORIGIN + i * BAR)) < w; i += 2) out += rect(x, 0, Math.min(88, w - x), '100%', 'rgba(0,0,0,.035)');
  for (i = -2; (x = Math.round(ORIGIN + i * BAR / 8)) < w; i++) {
    out += rect(x, 0, 1, '100%', i % 8 === 0 ? 'rgba(0,0,0,.25)' : i % 2 === 0 ? 'rgba(0,0,0,.12)' : 'rgba(0,0,0,.07)');
  }
  g.innerHTML = out;
});
document.querySelector('.scrub svg').innerHTML += '<path d="M26.500.5h354v10h-354zM27 .5l9 5-9 4.500M380 .5l-9 5 9 4.500" fill="none" stroke="#1e2433"/>';

// Rulers.
(function () {
  var bars = '', times = '', i, x, n;
  for (i = -1; i < 34; i++) {
    x = Math.round(ORIGIN + i * BAR / 4);
    n = i / 4;
    if (i % 4 === 0) {
      bars += '<path d="M' + (x - .5) + ' 21v-4.500h2"/>' + text(x + 4, 20, n + 3);
      times += '<path d="M' + (x - .5) + ' 1v7h2"/>' + text(x + 2, 12, '0:' + ('0' + (4 + 2 * n)).slice(-2));
    } else {
      bars += rect(x - 1, 21, 1, 1, '#222');
      times += rect(x - 1, 1, 1, 2, '#222');
    }
  }
  document.getElementById('bars').innerHTML = bars;
  document.getElementById('times').innerHTML = times + '<path d="M27 2v4h-4zM114 2v4h4z" style="fill:#7df;stroke:none"/>';
})();

// Overview strip.
(function () {
  var o = '';
  [7, 10, 13, 16].forEach(function (y) { o += '<rect x="0" y="' + y + '" width="calc(100% - 4px)" height="2" fill="#8c8c8c"/>'; });
  o += rect(35, 7, 20, 2, '#6b451c') + rect(106, 7, 64, 2, '#6b451c') + rect(50, 10, 97, 2, '#a99a1c') + rect(115, 13, 5, 2, '#2c7a1a');
  for (var i = 0; i < 9; i++) o += rect(121 + i * 5, 13, 4, 2, '#8fae7c');
  o += rect(145, 16, 39, 2, '#23a81d') + '<path d="M32 6h161v13H32zM34.500 7v11" fill="none" stroke="#000" stroke-width="2"/>';
  document.querySelector('.overview').innerHTML = o;
})();

// Clip contents.
var PAD = [[83,18,7,4],[95,18,11,4],[127,18,5,4],[146,18,3,4],[153,18,3,4],[161,18,2,4],[177,27,3,4],[69,32,6,3],[117,32,5,3],[55,63,6,4],[168,63,6,4],[98,68,7,3],[92,72,11,4],[78,81,6,3]];
var CHORDS = [[732,63,7,4],[745,63,5,4],[756,63,4,4],[767,63,4,4],[776,63,4,4],[785,63,5,4],[733,81,8,3],[746,81,5,3],[754,81,7,3],[767,81,6,3],[778,81,3,3],[786,81,5,3],[811,68,6,3],[822,68,5,3],[832,68,5,3],[842,68,5,3],[844,27,4,4],[867,27,6,4],[876,27,6,4],[887,27,6,4],[899,27,6,4],[877,41,4,3],[888,41,5,3],[899,41,5,3],[868,72,4,4],[882,72,4,4],[894,72,4,4],[902,72,5,4],[865,81,8,3],[882,81,6,3],[894,81,12,3]];
[18, 32, 59, 72].forEach(function (y) {
  [[652, 7], [667, 8], [683, 7], [699, 9]].forEach(function (n) { CHORDS.push([n[0], y, n[1], y === 18 || y === 72 ? 4 : 3]); });
});
$$('.ink').forEach(function (s) {
  var d = s.dataset, out = '', i;
  if (d.conga) d.conga.split(',').forEach(function (c, k) {
    var x = +c.split(':')[0], end = k ? +c.split(':')[1] : 116;
    [34, 68].forEach(function (y) {
      out += '<path class="ln" d="M' + x + ' ' + (y + .5) + 'H' + end + '"/><path transform="translate(' + x + ' ' + (y + .5) + ')" d="M0-16L1-16 2-7 6-3 11-1.500 26-.5V.5L11 1 7 2.500 3 6 1.500 9H0z"/>';
    });
  });
  if (d.pad) PAD.forEach(function (n) { out += rect(+d.pad + n[0], n[1], n[2], n[3]); });
  if (d.chords) CHORDS.forEach(function (n) { out += rect(n[0] - 364, n[1], n[2], n[3]); });
  if (d.voodoo) for (i = 0; i < 10; i++) {
    var x = +d.voodoo + Math.round(i * 22.1);
    out += rect(x, 2, 1, 3) + rect(x, 12, 1, 3);
    out += '<path transform="translate(' + x + ' 35.500)" d="M0-8L3-7 10-6 15-1.500 22-.5V.5L15 1.500 11 4.500 5 6 2 12H0z"/>';
    out += '<path transform="translate(' + x + ' 69.500)" d="M0-10L5-7 11-8 16-2 22-.5V.5L16 3 12 8 6 9 2 14H0z"/>';
  }
  s.innerHTML = out;
});
(function () {
  var o = '';
  for (var i = 0; i < 10; i++) o += '<circle cx="4" cy="' + (4 + i * 8) + '" r="3"/>';
  document.querySelector('.dots').innerHTML = o;
})();

// Sample editor.
(function () {
  var s = document.getElementById('editor'), w = s.getBoundingClientRect().width, o = '', i, x, b;
  o += rect(0, 0, w, 18, '#7c7c7c') + rect(0, 18, w, 1, '#333') + rect(0, 28, w, 1, '#333') + rect(0, 40, w, 1, '#5a5a5a') + rect(0, 41, w, 11, '#747474') + rect(0, 52, w, 6, '#5a5a5a');
  o += rect(2, 58, 192, 127, '#a9a9a9');
  for (i = 2; i < 6; i += 2) { x = 2 + i * 192; o += rect(x, 58, Math.min(192, w - x), 127, 'rgba(0,0,0,.06)'); }
  for (i = 0; (x = 2 + i * 24) < w; i++) {
    if (i) o += rect(x, 29, 1, 23, 'rgba(0,0,0,.06)') + rect(x, 58, 1, 127, i % 8 === 0 ? 'rgba(0,0,0,.2)' : 'rgba(0,0,0,.09)');
    if (i % 2 === 0 && x + 24 < w) {
      b = i / 2;
      o += '<path class="tick" d="M' + (x + .5) + ' 17v-4.500h2"/>' + text(x + 5, 16, Math.floor(b / 4) + 1 + (b % 4 ? '.' + (b % 4 + 1) : ''));
    } else o += rect(x, 17, 1, 1, '#222');
  }
  [89, 153].forEach(function (y) {
    o += rect(2, y, w - 4, 1, '#262530');
    [2, 194, 770].forEach(function (px) {
      o += '<path fill="#262530" transform="translate(' + px + ' ' + (y + .5) + ')" d="M0-31H1L2-13 10-5.500 15-4 20-3.500 30-1.500 75 0 30 1 15 2.500 7 6 1.500 16H0z"/>';
    });
  });
  o += rect(1, 18, 1, 167, '#262530') + rect(193, 28, 1, 157, '#262530') + rect(2, 42, 4, 10, '#ffc729') + '<path d="M2 53h4l-4 4z" fill="#f80"/>';
  o += '<path d="M2 18.500l9 5-9 5M2 29.500l9 5.500-9 5M193 29.500l-9 5.500 9 5M' + (w - 2) + ' 18.500l-9 5 9 5z" fill="none" stroke="#262530"/>';
  s.innerHTML = o;
})();

// Browser list.
(function () {
  var names = ['Kick-LD', 'Kick-SessionDry-Felt-H...', 'Kick-SessionDry-Felt-S...', 'Knaak Res', 'Knaak', 'Knac', 'Knarz1', 'Limette f1', 'Limette f2', 'Limette f3', 'Limette f4', 'Limette f5'];
  for (var c = 0; c < 6; c++) names.push('Lo Fi Voodoo - C' + c + ' - 1', 'Lo Fi Voodoo - C' + c + ' - 2');
  ['C0', 'C1', 'C2', 'C3', 'C4', 'C5', 'C6', 'F#0'].forEach(function (n) { names.push('Machine Punk - ' + n); });
  document.getElementById('files').innerHTML = names.map(function (n) {
    return '<li' + (n === 'Lo Fi Voodoo - C0 - 2' ? ' class="cur"' : '') + '><svg width="16" height="13"><use href="#i-file"/></svg>' + n + (/\.\.\.$/.test(n) ? '' : '.aif') + '</li>';
  }).join('');
})();
```
